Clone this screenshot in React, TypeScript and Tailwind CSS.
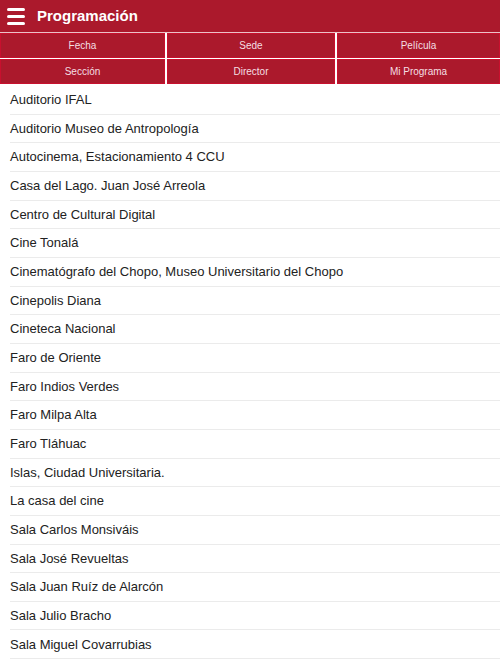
import React from "react";

const filters = ["Fecha", "Sede", "Película", "Sección", "Director", "Mi Programa"];

const venues = [
  "Auditorio IFAL",
  "Auditorio Museo de Antropología",
  "Autocinema, Estacionamiento 4 CCU",
  "Casa del Lago. Juan José Arreola",
  "Centro de Cultural Digital",
  "Cine Tonalá",
  "Cinematógrafo del Chopo, Museo Universitario del Chopo",
  "Cinepolis Diana",
  "Cineteca Nacional",
  "Faro de Oriente",
  "Faro Indios Verdes",
  "Faro Milpa Alta",
  "Faro Tláhuac",
  "Islas, Ciudad Universitaria.",
  "La casa del cine",
  "Sala Carlos Monsiváis",
  "Sala José Revueltas",
  "Sala Juan Ruíz de Alarcón",
  "Sala Julio Bracho",
  "Sala Miguel Covarrubias",
];

const App = () => {
  return (
    <div className="h-[667px] overflow-hidden bg-white font-['Liberation_Sans',Arial,sans-serif]">
      {/* top bar */}
      <header className="h-8 bg-[#ab192c] flex items-center pl-[7px] gap-3">
        <div className="flex flex-col gap-[4px] w-[18px]">
          <span className="h-[3px] bg-white rounded-full" />
          <span className="h-[3px] bg-white rounded-full" />
          <span className="h-[3px] bg-white rounded-full" />
        </div>
        <h1 className="text-white font-bold text-[15px]">Programación</h1>
      </header>

      {/* filter buttons */}
      <div className="grid grid-cols-[165px_168px_1fr] gap-x-[2px] gap-y-px border-t border-[#e9c3c8]">
        {filters.map((f) => (
          <button
            key={f}
            className="h-[25px] bg-[#ab192c] border border-[#c8102e] text-[10px] text-[#f4dfe2]"
          >
            {f}
          </button>
        ))}
      </div>

      {/* venue list */}
      <ul className="mt-[2px]">
        {venues.map((v) => (
          <li key={v} className="h-[28.67px] pl-[10px]">
            <div className="h-full border-b border-[#ebebeb] flex items-center text-[13px] text-[#222]">
              {v}
            </div>
          </li>
        ))}
      </ul>
    </div>
  );
};

export default App;
